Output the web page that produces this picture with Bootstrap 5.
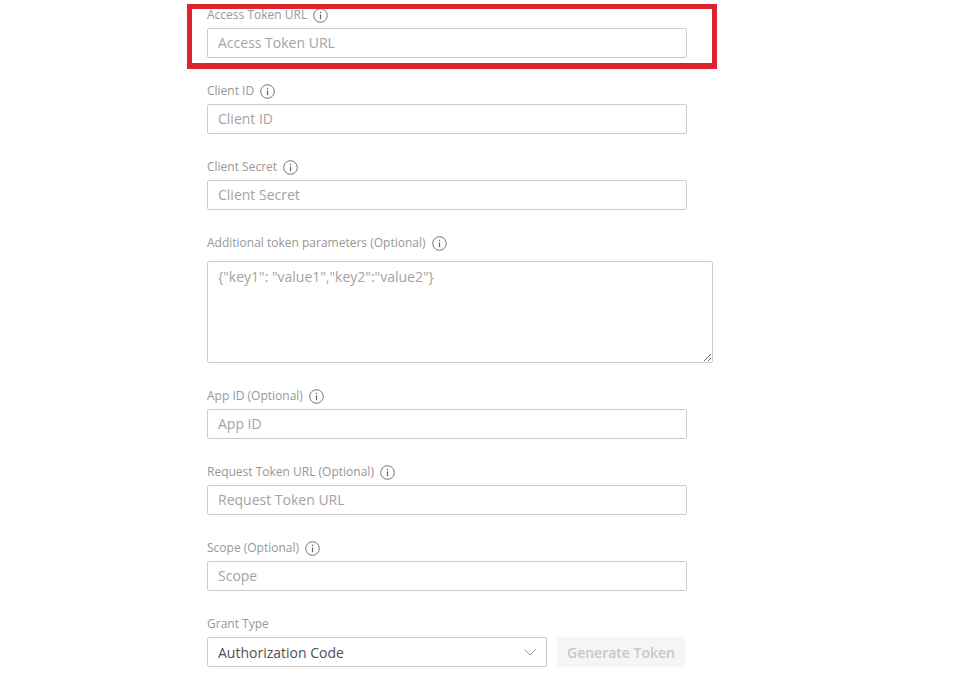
<!DOCTYPE html>
<html lang="en">
<head>
    <meta charset="UTF-8">
    <title>Token settings</title>
    <link href="https://cdn.jsdelivr.net/npm/bootstrap@5.3.2/dist/css/bootstrap.min.css" rel="stylesheet">
    <style>
        html, body { height: 679px; overflow: hidden; }
        body { background: #fff; font-family: "Open Sans", sans-serif; }
        .token-form { width: 506px; margin-left: 207px; padding-top: 5px; position: relative; }
        .field-row { margin-bottom: 23px; }
        .field-label { display: flex; align-items: center; gap: 6px; height: 20px; margin-bottom: 3px; font-size: 12px; color: #979797; }
        .field-label svg { width: 15px; height: 15px; color: #666; flex: none; }
        .field-input.form-control, .field-input.form-select {
            width: 480px; height: 30px; min-height: 0; padding: 0 10px 2px; font-size: 14px; line-height: 26px;
            color: #505050; border: 1px solid #cccccc; border-radius: 2px; box-shadow: none;
        }
        .field-input::placeholder, .field-area::placeholder { color: #a3a3a3; opacity: 1; }
        .field-area.form-control {
            display: block; width: 506px; height: 102px; margin-top: 8px; padding: 4px 10px; font-size: 14px;
            color: #505050; border: 1px solid #cccccc; border-radius: 2px; box-shadow: none;
        }
        .field-input.form-select {
            width: 340px; padding: 1px 10px 0; line-height: 27px;
            background-image: url("data:image/svg+xml,%3Csvg xmlns='http://www.w3.org/2000/svg' viewBox='0 0 12 7'%3E%3Cpath d='M.5.5 6 6 11.5.5' fill='none' stroke='%23999' stroke-width='1'/%3E%3C/svg%3E");
            background-size: 12px 7px; background-position: right 10px center;
        }
        .generate-btn.btn, .generate-btn.btn:disabled {
            width: 128px; height: 30px; padding: 0; font-size: 14px; font-weight: 600; color: #c8c8c8;
            background: #f5f5f5; border: 0; border-radius: 2px; opacity: 1;
        }
        .field-gap { gap: 10px; }
        .highlight-box { position: absolute; left: 187px; top: 4px; width: 530px; height: 65px; border: 5px solid #dc2430; border-bottom-width: 6px; pointer-events: none; }
    </style>
</head>
<body>
<svg width="0" height="0" class="position-absolute">
    <symbol id="info" viewBox="0 0 15 15">
        <circle cx="7.5" cy="7.5" r="6.8" fill="none" stroke="currentColor" stroke-width="0.9"/>
        <rect x="6.9" y="3.8" width="1.2" height="1.3" fill="currentColor"/>
        <path d="M7.5 6.4v4.8" fill="none" stroke="currentColor" stroke-width="1.2"/>
    </symbol>
</svg>

<form class="token-form">
    <div class="field-row">
        <label class="field-label" for="accessUrl">Access Token URL <svg><use href="#info"/></svg></label>
        <input id="accessUrl" class="form-control field-input" placeholder="Access Token URL">
    </div>
    <div class="field-row">
        <label class="field-label" for="clientId">Client ID <svg><use href="#info"/></svg></label>
        <input id="clientId" class="form-control field-input" placeholder="Client ID">
    </div>
    <div class="field-row">
        <label class="field-label" for="clientSecret">Client Secret <svg><use href="#info"/></svg></label>
        <input id="clientSecret" class="form-control field-input" placeholder="Client Secret">
    </div>
    <div class="field-row">
        <label class="field-label" for="extraParams">Additional token parameters (Optional) <svg><use href="#info"/></svg></label>
        <textarea id="extraParams" class="form-control field-area" placeholder='{"key1": "value1","key2":"value2"}'></textarea>
    </div>
    <div class="field-row">
        <label class="field-label" for="appId">App ID (Optional) <svg><use href="#info"/></svg></label>
        <input id="appId" class="form-control field-input" placeholder="App ID">
    </div>
    <div class="field-row">
        <label class="field-label" for="requestUrl">Request Token URL (Optional) <svg><use href="#info"/></svg></label>
        <input id="requestUrl" class="form-control field-input" placeholder="Request Token URL">
    </div>
    <div class="field-row">
        <label class="field-label" for="scope">Scope (Optional) <svg><use href="#info"/></svg></label>
        <input id="scope" class="form-control field-input" placeholder="Scope">
    </div>
    <div class="field-row">
        <label class="field-label" for="grantType">Grant Type</label>
        <div class="d-flex field-gap">
            <select id="grantType" class="form-select field-input">
                <option>Authorization Code</option>
            </select>
            <button type="button" class="btn generate-btn" disabled>Generate Token</button>
        </div>
    </div>
</form>
<div class="highlight-box"></div>

<script src="https://cdn.jsdelivr.net/npm/bootstrap@5.3.2/dist/js/bootstrap.bundle.min.js"></script>
</body>
</html>
